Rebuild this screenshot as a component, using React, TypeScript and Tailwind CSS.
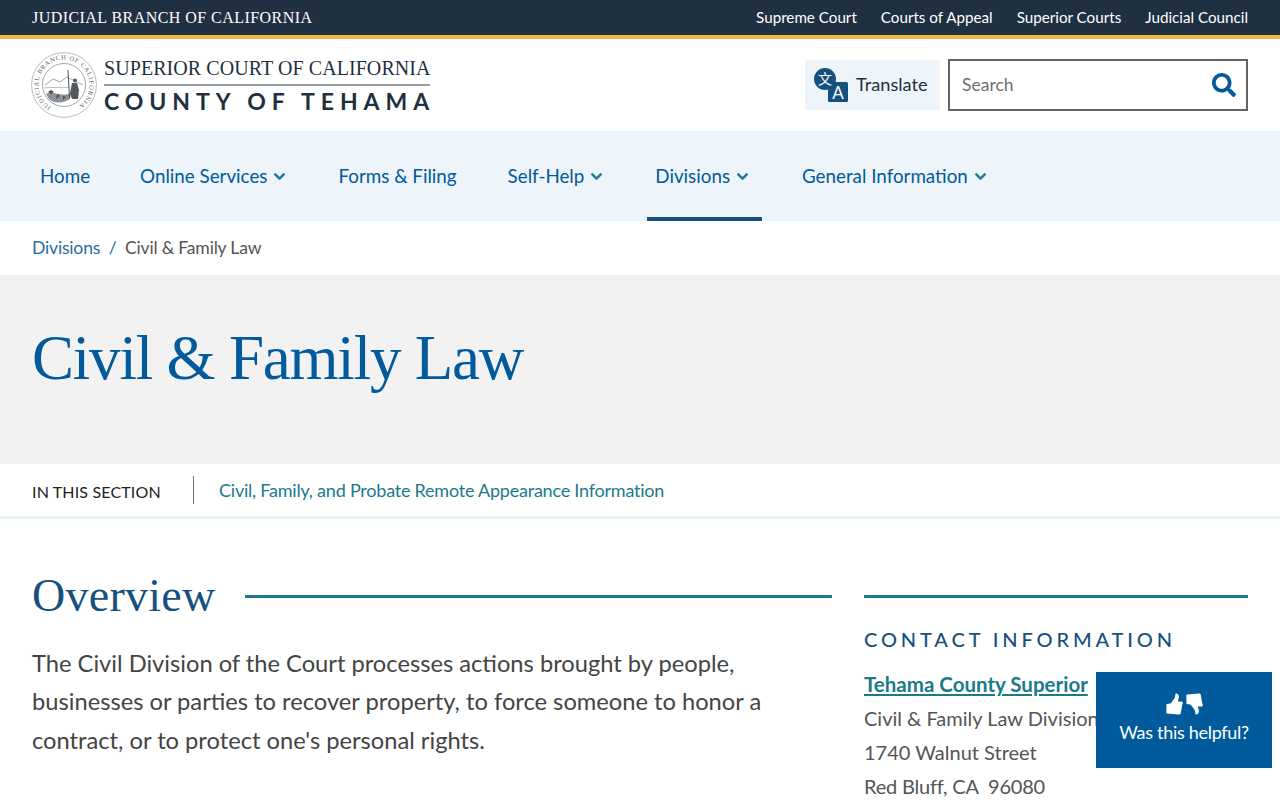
import { ChevronDown } from "lucide-react";
import { FaSearch } from "react-icons/fa";

const courtLinks = ["Supreme Court", "Courts of Appeal", "Superior Courts", "Judicial Council"];

const navItems = [
  { label: "Home", menu: false, active: false, pad: "pr-[10px]" },
  { label: "Online Services", menu: true, active: false, pad: "pr-[10px]" },
  { label: "Forms & Filing", menu: false, active: false, pad: "pr-[11px]" },
  { label: "Self-Help", menu: true, active: false, pad: "pr-[10px]" },
  { label: "Divisions", menu: true, active: true, pad: "pr-[11px]" },
  { label: "General Information", menu: true, active: false, pad: "pr-[10px]" },
];

const Seal = () => (
  <svg width="66" height="66" viewBox="0 0 66 66" className="shrink-0">
    <defs>
      <path id="sealText" d="M 20.25 55.08 A 25.5 25.5 0 1 1 45.75 55.08" />
    </defs>
    <circle cx="33" cy="33" r="32.4" fill="#fff" stroke="#9aa0a5" strokeWidth="0.7" />
    <circle cx="33" cy="33" r="21.5" fill="#fff" stroke="#7d8489" strokeWidth="0.7" />
    <text fontSize="6.4" fill="#5b6268" fontFamily="'Liberation Serif', serif">
      <textPath href="#sealText" textLength="130" lengthAdjust="spacing">
        JUDICIAL BRANCH OF CALIFORNIA
      </textPath>
    </text>
    <path d="M14 33 L22 27 L29 30 L36 25 L52 33" fill="none" stroke="#888f94" strokeWidth="0.8" />
    <path d="M13 36 C20 34 30 37 39 35" fill="none" stroke="#9aa0a5" strokeWidth="0.7" />
    <path d="M15 42 C22 38 30 46 40 41 L39 47 C32 52 22 51 18 47 Z" fill="#8b9196" />
    <path d="M20 38 l3 2 l-3 2 l-3 -2 Z M26 42 l3 2 l-4 3 Z M32 44 l3 1 l-3 3 Z" fill="#4b5258" />
    <path d="M37 18 L38.5 46" stroke="#3b4248" strokeWidth="0.9" />
    <path d="M41 31 L46 31 L48 38 L47 47 L41 47 L39 41 Z" fill="#50575d" />
    <circle cx="44" cy="28.5" r="2" fill="#50575d" />
  </svg>
);

const TranslateIcon = () => (
  <svg width="34" height="34" viewBox="0 0 34 34" className="shrink-0">
    <circle cx="11" cy="11" r="11" fill="#15507e" />
    <rect x="14" y="14" width="20" height="20" rx="1.5" fill="#15507e" />
    <text x="24" y="30.5" textAnchor="middle" fontSize="17" fill="#fff" fontFamily="Lato, sans-serif">A</text>
    <text x="11" y="16" textAnchor="middle" fontSize="14" fill="#fff" fontFamily="'Noto Sans CJK SC', sans-serif">文</text>
  </svg>
);

// flip turns the thumb-up into the thumb-down next to it
const Thumb = ({ flip }: { flip?: boolean }) => (
  <svg width="17" height="22" viewBox="0 0 17 22" className={flip ? "-scale-y-100" : ""}>
    <path
      d="M0.5 11 L4.5 10.5 C6.5 8 8.5 6 9 4 L9.5 0.6 C12 0 13.5 2.5 12.6 5.5 L11.8 8.5 L15.5 8.5 C17 8.6 17.3 10.5 16.3 11.5 L14.8 20 C14.5 21.4 13.6 21.6 12.5 21.5 L1.2 20.6 C0.5 20.5 0.3 20 0.3 19.5 Z"
      fill="#fff"
    />
  </svg>
);

export default function App() {
  return (
    <div className="relative h-screen overflow-hidden bg-white font-['Lato',sans-serif] text-[#3f3f3f]">
      <div className="flex h-[39px] items-center justify-between border-b-[4px] border-[#f0b840] bg-[#1f3041] pl-[32px] pr-[32px] text-white">
        <div className="font-['Liberation_Serif',serif] text-[16px] tracking-[0.45px]">JUDICIAL BRANCH OF CALIFORNIA</div>
        <div className="flex gap-[24px] text-[15.2px]">
          {courtLinks.map((link) => (
            <a key={link}>{link}</a>
          ))}
        </div>
      </div>

      <header className="flex h-[92px] items-center justify-between pl-[31px] pr-[32px]">
        <div className="flex items-center gap-[7px]">
          <Seal />
          <div className="w-[326px]">
            <div className="-mt-[1px] whitespace-nowrap border-b-2 border-[#9a9fa3] pb-[2px] font-['Liberation_Serif',serif] text-[20px] leading-[28px] tracking-[0.07px] text-[#1f3041]">
              SUPERIOR COURT OF CALIFORNIA
            </div>
            <div className="whitespace-nowrap pt-[1px] text-[23px] font-bold leading-[28px] tracking-[5.95px] text-[#1f3041]">
              COUNTY OF TEHAMA
            </div>
          </div>
        </div>
        <div className="flex items-center gap-[8px]">
          <div className="flex h-[50px] w-[135px] items-center gap-[8px] bg-[#edf4fa] pl-[9px] text-[18.2px] text-[#1f3041]">
            <TranslateIcon />
            <span className="-mt-[1px]">Translate</span>
          </div>
          <div className="flex h-[52px] w-[300px] items-center justify-between border-2 border-[#636363] pl-[12px] pr-[10px]">
            <span className="text-[17.5px] text-[#6f6f6f]">Search</span>
            <FaSearch className="text-[24px] text-[#005a9c]" />
          </div>
        </div>
      </header>

      <nav className="flex h-[90px] gap-[32px] bg-[#edf4fa] pl-[32px] text-[18.8px] text-[#005a9c]">
        {navItems.map((item) => (
          <div
            key={item.label}
            className={`flex shrink-0 items-center gap-[4px] whitespace-nowrap pl-[8px] ${item.pad} ${
              item.active ? "border-y-[4px] border-t-transparent border-b-[#15507e]" : ""
            }`}
          >
            <span>{item.label}</span>
            {item.menu && <ChevronDown size={17} strokeWidth={3.5} className="text-[#1a7f8e]" />}
          </div>
        ))}
      </nav>

      <div className="flex h-[54px] items-center gap-[8.5px] pl-[32px] text-[17.6px] tracking-[-0.2px]">
        <a className="text-[#2b6ca3]">Divisions</a>
        <span className="text-[#2b6ca3]">/</span>
        <span className="text-[#555]">Civil &amp; Family Law</span>
      </div>

      <div className="flex h-[189px] items-center bg-[#f2f2f2] pb-[23px] pl-[32px]">
        <h1 className="font-['Liberation_Serif',serif] text-[63px] tracking-[-1.2px] text-[#005a9c]">Civil &amp; Family Law</h1>
      </div>

      <div className="flex h-[55px] items-center border-b-[3px] border-[#e6f2f3] pl-[32px]">
        <div className="mt-[3px] w-[161px] text-[16px] tracking-[0.15px] text-[#222]">IN THIS SECTION</div>
        <div className="h-[28px] w-px bg-[#777]" />
        <a className="pl-[25px] text-[18px] tracking-[-0.22px] text-[#1a7a8c]">
          Civil, Family, and Probate Remote Appearance Information
        </a>
      </div>

      <main className="flex gap-[32px] pl-[32px] pr-[32px] pt-[52px]">
        <section className="w-[800px]">
          <div className="flex items-center gap-[30px]">
            <h2 className="font-['Liberation_Serif',serif] text-[46px] leading-[50px] tracking-[0.25px] text-[#15507e]">
              Overview
            </h2>
            <div className="h-[3px] flex-1 bg-[#217a8b]" />
          </div>
          <p className="mt-[23px] text-[23.7px] leading-[38.4px] text-[#444]">
            The Civil Division of the Court processes actions brought by people, businesses or parties to recover
            property, to force someone to honor a contract, or to protect one's personal rights.
          </p>
        </section>
        <aside className="w-[384px] pt-[24px]">
          <div className="h-[3px] bg-[#217a8b]" />
          <h3 className="mt-[28px] text-[20px] font-medium leading-[26px] tracking-[3.87px] text-[#15507e]">
            CONTACT INFORMATION
          </h3>
          <a className="mt-[17px] block text-[20.5px] font-bold leading-[30px] text-[#1a7a8c] underline">
            Tehama County Superior
          </a>
          <div className="mt-[2px] text-[20px] leading-[34px] text-[#555]">
            <div>Civil &amp; Family Law Division</div>
            <div>1740 Walnut Street</div>
            <div className="whitespace-pre tracking-[-0.2px]">Red Bluff, CA  96080</div>
          </div>
        </aside>
      </main>

      <div className="fixed bottom-[32px] right-[8px] flex h-[96px] w-[176px] flex-col items-center justify-center bg-[#005a9c] pb-[4px] text-white">
        <div className="flex items-start gap-[3px]">
          <Thumb />
          <Thumb flip />
        </div>
        <div className="mt-[5px] text-[18px] leading-[24px] tracking-[-0.3px]">Was this helpful?</div>
      </div>
    </div>
  );
}
